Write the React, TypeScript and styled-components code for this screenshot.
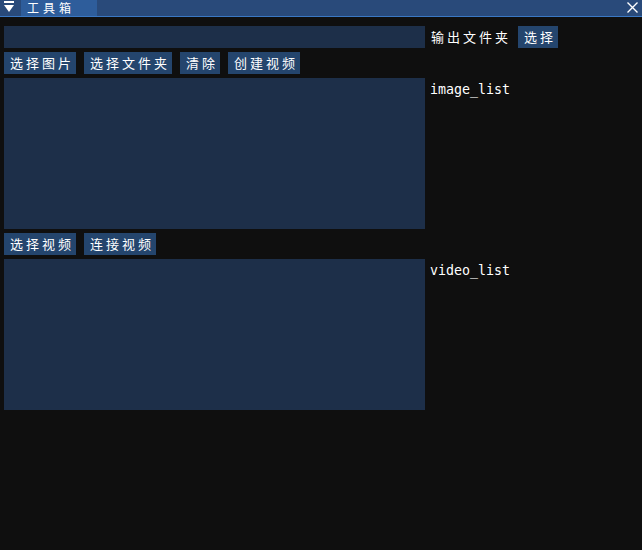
import React from "react";
import styled, { createGlobalStyle } from "styled-components";

const Global = createGlobalStyle`
  html, body { margin: 0; padding: 0; background: #0f0f0f; }
  body { width: 642px; height: 550px; overflow: hidden; }
`;

const CJK = `"Noto Sans CJK SC", "Noto Sans", sans-serif`;
const MONO = `"DejaVu Sans Mono", "Liberation Mono", monospace`;

const Window = styled.div`
  width: 642px;
  height: 550px;
  background: #0f0f0f;
  display: flex;
  flex-direction: column;
  color: #ffffff;
`;

const TitleBar = styled.div`
  height: 16px;
  background: #294a7a;
  border-bottom: 1px solid #3a78c4;
  display: flex;
  align-items: stretch;
`;

const MenuButton = styled.div`
  width: 21px;
  display: flex;
  align-items: flex-start;
  justify-content: flex-start;
`;

const Tab = styled.div`
  width: 70px;
  height: 16px;
  padding-left: 6px;
  background: #2e5d9b;
  display: flex;
  align-items: center;
`;

const TabText = styled.span`
  font-family: ${CJK};
  font-size: 12px;
  letter-spacing: 4px;
  line-height: 16px;
  color: #ffffff;
  white-space: nowrap;
`;

const Spacer = styled.div`
  flex: 1;
`;

const CloseButton = styled.div`
  width: 20px;
  display: flex;
`;

const Content = styled.div`
  padding: 9px 4px 0 4px;
  display: flex;
  flex-direction: column;
  gap: 4px;
`;

const Row = styled.div<{ $gap?: number }>`
  display: flex;
  align-items: flex-start;
  gap: ${(p) => p.$gap ?? 8}px;
`;

const Input = styled.div`
  width: 421px;
  height: 22px;
  background: #1d2f49;
`;

const ListBox = styled.div`
  width: 421px;
  height: 151px;
  background: #1d2f49;
`;

const Button = styled.div<{ $ml?: number }>`
  height: 22px;
  margin-left: ${(p) => p.$ml ?? 0}px;
  padding: 0 2px 0 6px;
  background: #24456d;
  font-family: ${CJK};
  font-size: 13px;
  letter-spacing: 3px;
  line-height: 22px;
  color: #ffffff;
  white-space: nowrap;
`;

const CjkLabel = styled.div<{ $ml?: number }>`
  margin-left: ${(p) => p.$ml ?? 0}px;
  height: 22px;
  padding-left: 1px;
  font-family: ${CJK};
  font-size: 13px;
  letter-spacing: 3px;
  line-height: 22px;
  color: #ffffff;
  white-space: nowrap;
`;

const MonoLabel = styled.div`
  margin-left: 5px;
  padding-top: 4px;
  font-family: ${MONO};
  font-size: 13.3px;
  line-height: 16px;
  color: #ffffff;
  white-space: nowrap;
`;

const ButtonRow = ({ labels }: { labels: string[] }) => (
  <Row>
    {labels.map((l) => (
      <Button key={l}>{l}</Button>
    ))}
  </Row>
);

export default function App() {
  return (
    <>
      <Global />
      <Window>
        <TitleBar>
          <MenuButton>
            <svg width="18" height="16" viewBox="0 0 18 16">
              <rect x="4" y="1" width="10" height="2" fill="#ffffff" />
              <polygon points="4,5 14,5 9,12" fill="#ffffff" />
            </svg>
          </MenuButton>
          <Tab>
            <TabText>工具箱</TabText>
          </Tab>
          <Spacer />
          <CloseButton>
            <svg width="20" height="16" viewBox="0 0 20 16">
              <path d="M5.5 2.5 L15.5 12.5 M15.5 2.5 L5.5 12.5" stroke="#ffffff" strokeWidth="1.4" />
            </svg>
          </CloseButton>
        </TitleBar>
        <Content>
          <Row $gap={0}>
            <Input />
            <CjkLabel $ml={5}>输出文件夹</CjkLabel>
            <Button $ml={7}>选择</Button>
          </Row>
          <ButtonRow labels={["选择图片", "选择文件夹", "清除", "创建视频"]} />
          <Row $gap={0}>
            <ListBox />
            <MonoLabel>image_list</MonoLabel>
          </Row>
          <ButtonRow labels={["选择视频", "连接视频"]} />
          <Row $gap={0}>
            <ListBox />
            <MonoLabel>video_list</MonoLabel>
          </Row>
        </Content>
      </Window>
    </>
  );
}
